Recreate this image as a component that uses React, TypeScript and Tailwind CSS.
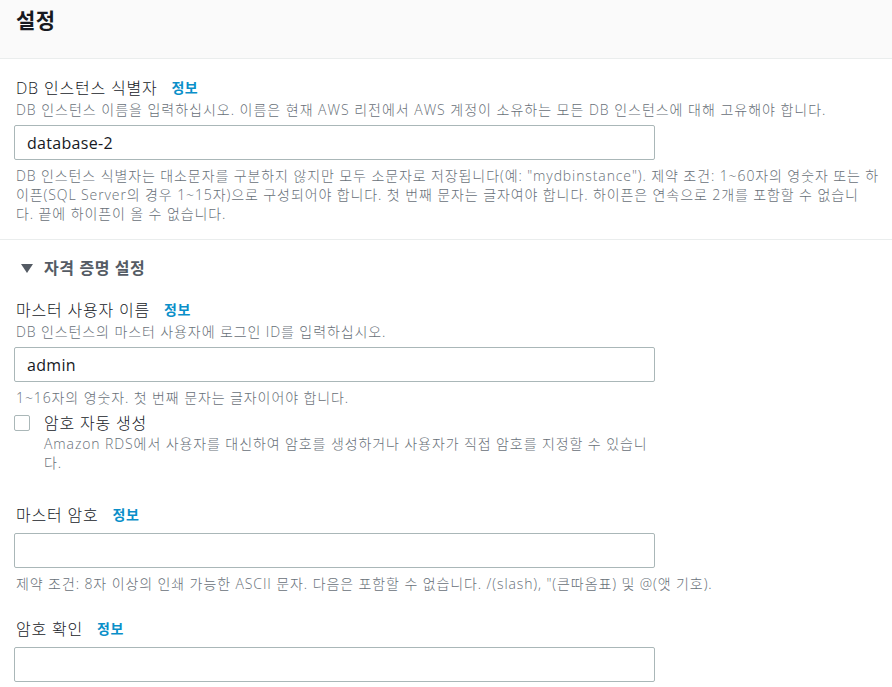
import React from "react";

const font = { fontFamily: '"Open Sans", "Noto Sans CJK KR", sans-serif' };

function Info() {
  return <span className="ml-[14px] text-[14px] font-bold tracking-[0.5px] text-[#0a8fc9]">정보</span>;
}

function Input({ value }: { value?: string }) {
  return (
    <div className="w-[641px] h-[35px] border border-[#aab7b8] rounded-[2px] bg-white flex items-center pl-[12px] text-[16px] tracking-[0.3px] text-[#16191f]">
      {value}
    </div>
  );
}

const label = "pl-[2px] flex items-center text-[16px] leading-[22px] font-light tracking-[0.8px] text-[#16191f]";
const desc = "pl-[2px] text-[14px] leading-[19px] font-light tracking-[0.9px] text-[#687078]";

export default function App() {
  return (
    <div className="w-[892px] h-[687px] bg-white overflow-hidden" style={font}>
      <div className="h-[59px] bg-[#fafafa] border-b border-[#eaeded] flex items-center pl-[16px] pb-[17px]">
        <h2 className="text-[21px] font-bold tracking-[0.5px] text-[#16191f]">설정</h2>
      </div>
      <div className="px-[14px]">
        <div className={`pt-[18px] ${label}`}>
          DB 인스턴스 식별자<Info />
        </div>
        <div className={`mt-[1px] ${desc} tracking-[0.98px]`}>
          DB 인스턴스 이름을 입력하십시오. 이름은 현재 AWS 리전에서 AWS 계정이 소유하는 모든 DB 인스턴스에 대해 고유해야 합니다.
        </div>
        <div className="mt-[6px]">
          <Input value="database-2" />
        </div>
        <div className={`mt-[6px] whitespace-nowrap ${desc}`}>
          DB 인스턴스 식별자는 대소문자를 구분하지 않지만 모두 소문자로 저장됩니다(예: "mydbinstance"). 제약 조건: 1~60자의 영숫자 또는 하
          <br />
          이픈(SQL Server의 경우 1~15자)으로 구성되어야 합니다. 첫 번째 문자는 글자여야 합니다. 하이픈은 연속으로 2개를 포함할 수 없습니
          <br />
          다. 끝에 하이픈이 올 수 없습니다.
        </div>
      </div>
      <div className="mt-[16px] border-t border-[#eaeded]" />
      <div className="px-[14px]">
        <div className="pt-[16px] pl-[7px] flex items-center text-[16px] leading-[24px] font-bold tracking-[0.6px] text-[#545b64]">
          <svg width="12" height="10" viewBox="0 0 12 10" className="mr-[11px]">
            <polygon points="0,1 12,1 6,10" fill="#545b64" />
          </svg>
          자격 증명 설정
        </div>
        <div className={`mt-[19px] ${label}`}>
          마스터 사용자 이름<Info />
        </div>
        <div className={`mt-[1px] ${desc}`}>
          DB 인스턴스의 마스터 사용자에 로그인 ID를 입력하십시오.
        </div>
        <div className="mt-[6px]">
          <Input value="admin" />
        </div>
        <div className={`mt-[6px] ${desc}`}>
          1~16자의 영숫자. 첫 번째 문자는 글자이어야 합니다.
        </div>
        <div className="mt-[8px] flex items-start">
          <div className="w-[16px] h-[16px] border border-[#aab7b8] rounded-[2px] bg-white shrink-0" />
          <div className="ml-[14px] w-[612px]">
            <div className="text-[16px] leading-[16px] font-light tracking-[0.8px] text-[#16191f]">암호 자동 생성</div>
            <div className="mt-[3px] text-[14px] leading-[19px] font-light tracking-[0.9px] text-[#687078]">
              Amazon RDS에서 사용자를 대신하여 암호를 생성하거나 사용자가 직접 암호를 지정할 수 있습니다.
            </div>
          </div>
        </div>
        <div className={`mt-[32px] ${label}`}>
          마스터 암호<Info />
        </div>
        <div className="mt-[7px]">
          <Input />
        </div>
        <div className={`mt-[6px] ${desc}`}>
          제약 조건: 8자 이상의 인쇄 가능한 ASCII 문자. 다음은 포함할 수 없습니다. /(slash), "(큰따옴표) 및 @(앳 기호).
        </div>
        <div className={`mt-[25px] ${label}`}>
          암호 확인<Info />
        </div>
        <div className="mt-[7px]">
          <Input />
        </div>
      </div>
    </div>
  );
}
